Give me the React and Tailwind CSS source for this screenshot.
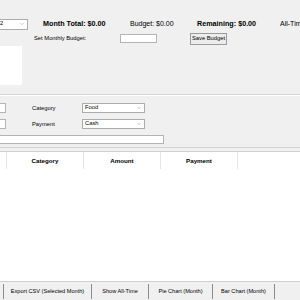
import { ChevronDown } from 'lucide-react';

function Combo({ value, className }) {
  return (
    <div className={`flex items-center justify-between border border-[#acacac] bg-white pl-[2px] pr-[2px] ${className}`}>
      <span className="text-[5.8px] leading-none">{value}</span>
      <ChevronDown size={6} strokeWidth={1.5} className="text-[#7a7a7a]" />
    </div>
  );
}

function Entry({ className }) {
  return <div className={`border border-[#b4b4b4] bg-white ${className}`} />;
}

export default function App() {
  const columns = ['', 'Category', 'Amount', 'Payment', ''];
  const buttons = [
    { label: 'Export CSV (Selected Month)', w: 'w-[88px]' },
    { label: 'Show All-Time', w: 'w-[57px]' },
    { label: 'Pie Chart (Month)', w: 'w-[64px]' },
    { label: 'Bar Chart (Month)', w: 'w-[62px]' },
  ];

  return (
    <div className="relative flex h-[300px] w-[300px] flex-col overflow-hidden bg-[#f0f0f0] font-['Liberation_Sans',Arial,sans-serif] text-black">
      {/* Summary + budget */}
      <div className="grid h-[94px] grid-cols-[30px_88px_70px_82px_30px] grid-rows-[14px_15px_40px] pt-[17px]">
        <div className="flex items-center">
          <Combo value="2025-02" className="-ml-[21px] h-[11px] w-[49px] shrink-0" />
        </div>
        <div className="flex items-center pl-[13px] text-[7.2px] font-bold whitespace-nowrap">Month Total: $0.00</div>
        <div className="flex items-center pl-[12px] text-[7px] whitespace-nowrap">Budget: $0.00</div>
        <div className="flex items-center pl-[9px] text-[7.2px] font-bold whitespace-nowrap">Remaining: $0.00</div>
        <div className="flex items-center pl-[10px] text-[7px] whitespace-nowrap">All-Time Total: $0.00</div>

        <div />
        <div className="flex items-center pl-[4px] text-[5.8px] whitespace-nowrap">Set Monthly Budget:</div>
        <div className="flex items-center pl-[2px]">
          <Entry className="h-[9px] w-[37px]" />
        </div>
        <div className="flex items-center pl-[2px]">
          <button className="flex h-[12px] w-[37px] items-center justify-center border border-[#9c9c9c] bg-[#ececec] text-[5.8px] leading-none">
            Save Budget
          </button>
        </div>
        <div />

        <div className="pt-[0px]">
          <div className="h-[39px] w-[22px] bg-white" />
        </div>
      </div>

      <div className="h-px bg-[#d4d4d4]" />
      <div className="h-px bg-white" />

      {/* Entry form */}
      <div className="flex h-[51px] flex-col gap-[6px] pt-[7px]">
        <div className="flex h-[10px] items-center">
          <Entry className="h-[10px] w-[6px] border-l-0" />
          <span className="ml-[26px] w-[50px] text-[5.8px]">Category</span>
          <Combo value="Food" className="h-[10px] w-[63px]" />
        </div>
        <div className="flex h-[10px] items-center">
          <Entry className="h-[10px] w-[6px] border-l-0" />
          <span className="ml-[26px] w-[50px] text-[5.8px]">Payment</span>
          <Combo value="Cash" className="h-[10px] w-[63px]" />
        </div>
        <Entry className="h-[9px] w-[164px] border-l-0" />
      </div>

      <div className="h-px bg-[#d4d4d4]" />
      <div className="h-[3px]" />

      {/* Table */}
      <div className="flex flex-1 flex-col border-t border-[#d0d0d0] bg-white">
        <div className="flex h-[17px]">
          <div className="w-[7px] border-r border-[#e5e5e5]" />
          {columns.slice(1, 4).map((c) => (
            <div key={c} className="flex w-[77px] items-center justify-center border-r border-[#e5e5e5] text-[6.2px] font-bold">
              {c}
            </div>
          ))}
          <div className="flex-1" />
        </div>
        <div className="flex-1" />
      </div>

      {/* Buttons */}
      <div className="flex h-[19px] items-center border-t border-[#d0d0d0] bg-[#f0f0f0]">
        <div className="h-[15px] w-[4px] border-r border-[#8c8c8c]" />
        {buttons.map((b) => (
          <button
            key={b.label}
            className={`flex h-[15px] items-center justify-center border-r border-[#8c8c8c] text-[5.6px] whitespace-nowrap ${b.w}`}
          >
            {b.label}
          </button>
        ))}
      </div>
    </div>
  );
}
